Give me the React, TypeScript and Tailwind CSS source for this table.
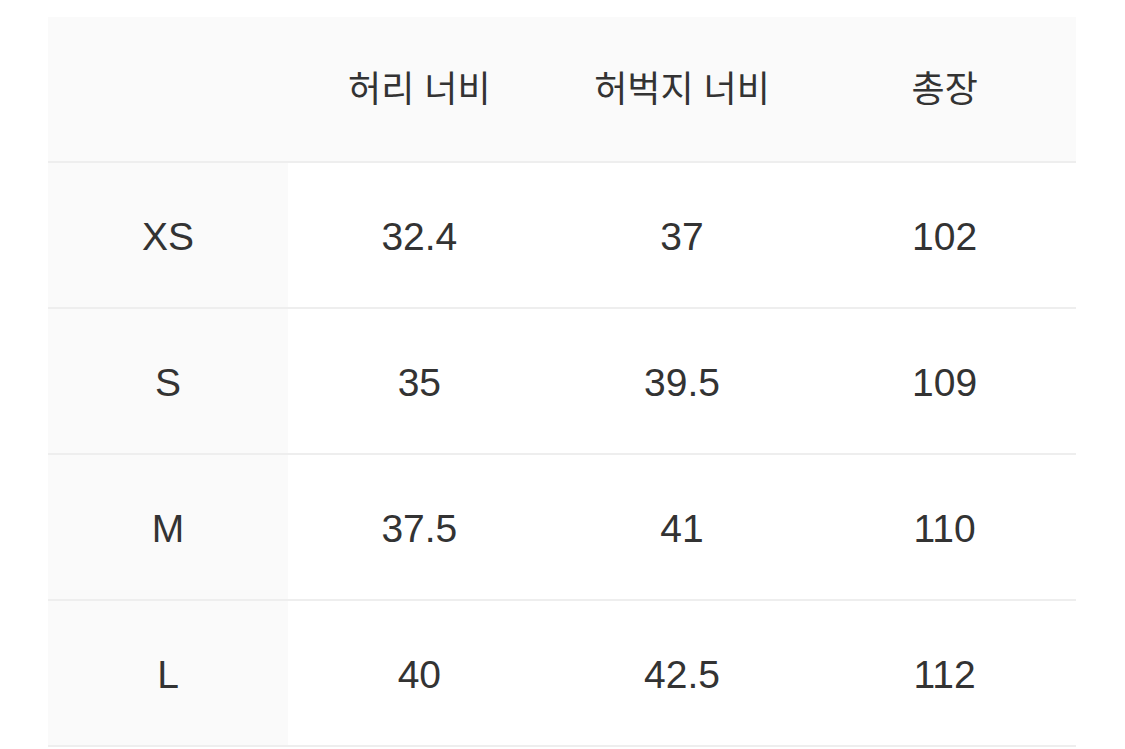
import React from "react";

const rows = [
  ["XS", "32.4", "37", "102"],
  ["S", "35", "39.5", "109"],
  ["M", "37.5", "41", "110"],
  ["L", "40", "42.5", "112"],
];

export default function App() {
  return (
    <div
      className="w-[1125px] h-[749px] bg-white overflow-hidden pt-[17px] pl-[48px] text-[#333333]"
      style={{ fontFamily: '"Liberation Sans", "Noto Sans CJK KR", sans-serif' }}
    >
      <div className="w-[1028px]">
        <div className="grid grid-cols-[240px_1fr_1fr_1fr] h-[146px] pt-[2px] bg-[#fafafa] border-b-2 border-[#eeeeee] items-center text-center text-[36px]">
          <div></div>
          <div>허리 너비</div>
          <div>허벅지 너비</div>
          <div>총장</div>
        </div>
        {rows.map((r) => (
          <div
            key={r[0]}
            className="grid grid-cols-[240px_1fr_1fr_1fr] h-[146px] border-b-2 border-[#eeeeee] text-center text-[39px]"
          >
            <div className="bg-[#fafafa] flex items-center justify-center pt-[4px]">{r[0]}</div>
            <div className="flex items-center justify-center pt-[4px]">{r[1]}</div>
            <div className="flex items-center justify-center pt-[4px]">{r[2]}</div>
            <div className="flex items-center justify-center pt-[4px]">{r[3]}</div>
          </div>
        ))}
      </div>
    </div>
  );
}
